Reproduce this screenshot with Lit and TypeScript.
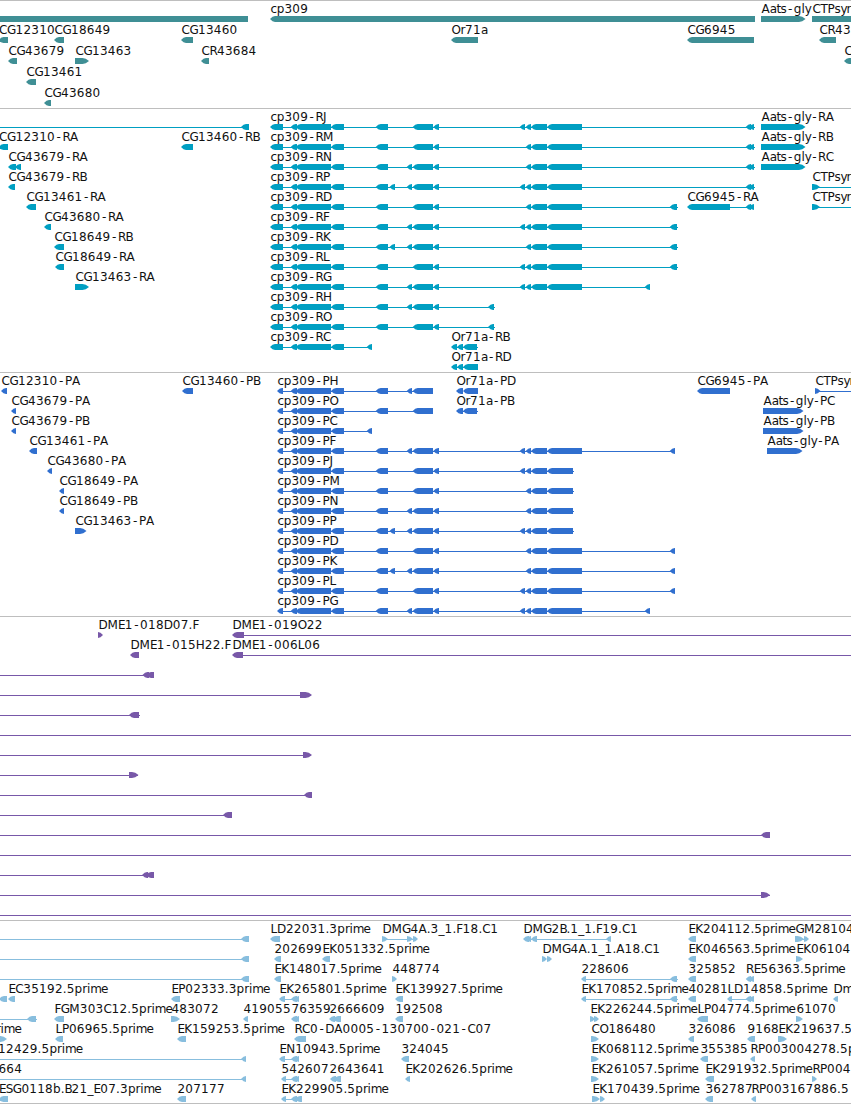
import { LitElement, html, svg, css } from "lit";
import { customElement, property } from "lit/decorators.js";

type Exon = [number, number];
interface Feature {
  row: number;
  label?: string;
  labelX?: number;
  exons: Exon[];
  dir?: "L" | "R" | "N";
  line?: Exon;
}
interface Track {
  kind: string;
  height: number;
  top: number;
  pitch: number;
  features: Feature[];
}

const VIEW = 851;
const f = (row: number, label: string, exons: Exon[], dir: Feature["dir"] = "L", line?: Exon, labelX?: number): Feature =>
  ({ row, label, exons, dir, line, labelX });

/* Advance of each glyph in a label, in pixels. */
const ADVANCE: Record<string, number> = {
  C: 8, G: 8.6, R: 7.6, A: 8.3, B: 7, D: 9, E: 6.9, F: 6.3, H: 9, J: 3.5, K: 7.7, L: 6.5, M: 10.5,
  N: 9, O: 9, P: 7, S: 7, T: 7, a: 6.7, b: 7.7, c: 6.3, e: 7, g: 7.7, i: 3.2, l: 3.2, m: 10.8,
  n: 7.5, p: 7.7, r: 4.7, s: 6, t: 4, y: 6, "-": 7.4, ".": 3.9, _: 6,
};
const glyphX = (text: string, start: number): string => {
  let x = start + 0.4;
  return [...text].map((ch) => {
    const at = ch === "-" ? x + 1.5 : x;
    x += ADVANCE[ch] ?? 7.9;
    return at.toFixed(1);
  }).join(" ");
};

/* cp309 isoforms share one exon chain; flags a, b and d switch the optional exons on. */
const chain = (start: number, flags: string, last: number): Exon[] => {
  const out: Exon[] = [[start, 283], [290.7, 297], [295.7, 331], [331, 344]];
  if (last <= 344) return out;
  out.push([375.7, 388]);
  if (flags.includes("a")) out.push([389.5, 395]);
  if (flags.includes("b")) out.push([406.7, 412]);
  out.push([412.7, 433]);
  if (last <= 433) return out;
  out.push([433.3, 439]);
  if (last <= 439) return out;
  if (flags.includes("d")) out.push([519.7, 525]);
  out.push([525.7, 531], [531, 547], [547, last]);
  return out;
};
const iso = (row: number, name: string, start: number, flags: string, last: number, tail: Exon[] = [], end?: number): Feature => {
  const exons = [...chain(start, flags, last), ...tail];
  return f(row, "cp309-" + name, exons, "L", [start + 1, end ?? exons[exons.length - 1][1]]);
};
const PAIR: Exon[] = [[745.7, 751], [749, 754]];
const END: Exon[] = [[669.7, 677]];
const PEND: Exon[] = [[669.7, 675]];

const genes: Feature[] = [
  f(0, "", [[-9, 248]], "N"), f(0, "cp309", [[270, 755]]), f(0, "Aats-gly", [[761, 805.5]], "R"),
  f(0, "CTPsyn", [[812, 862]], "R"), f(1, "CG12310", [[-1.5, 8]]), f(1, "CG18649", [[54, 64]]),
  f(1, "CG13460", [[181, 193]]), f(1, "Or71a", [[451, 478]]), f(1, "CG6945", [[687, 754]]),
  f(1, "CR43", [[819, 836]]), f(2, "CG43679", [[8, 17]]), f(2, "CG13463", [[75, 89]], "R"),
  f(2, "CR43684", [[201, 209]]), f(2, "C", [[844, 862]]), f(3, "CG13461", [[26, 36]]), f(4, "CG43680", [[44, 51]]),
];

const transcripts: Feature[] = [
  f(0, "", [[241, 249]], "L", [0, 248]),
  f(1, "CG12310-RA", [[-1.5, 8]]), f(1, "CG13460-RB", [[181, 193]]),
  f(2, "CG43679-RA", [[8, 16], [15, 21]]), f(3, "CG43679-RB", [[8, 15]]),
  f(4, "CG13461-RA", [[26, 36]]), f(5, "CG43680-RA", [[44, 51]]),
  f(6, "CG18649-RB", [[54, 64]]), f(7, "CG18649-RA", [[55, 64]]), f(8, "CG13463-RA", [[75, 89]], "R"),
  iso(0, "RJ", 270, "d", 582, PAIR, 755), iso(1, "RM", 270, "", 582, PAIR, 755),
  iso(2, "RN", 270, "b", 582, PAIR, 755), iso(3, "RP", 270, "abd", 582, PAIR, 755),
  iso(4, "RD", 270, "", 582, END, 678), iso(5, "RF", 270, "bd", 582, END, 678),
  iso(6, "RK", 270, "ab", 582, END, 678), iso(7, "RL", 270, "d", 582, END, 678),
  iso(8, "RG", 270, "bd", 582, [[644.7, 650]]), iso(9, "RH", 270, "b", 439, [[488, 494]], 495),
  iso(10, "RO", 270, "", 439, [[488, 494]], 495), iso(11, "RC", 270, "", 344, [[366.7, 372]]),
  f(11, "Or71a-RB", [[451, 457], [457, 463], [463, 477]], "L", [452, 478]),
  f(12, "Or71a-RD", [[451, 457], [457, 463], [463, 478]], "L", [452, 478]),
  f(4, "CG6945-RA", [[687, 730], ...PAIR], "L", [690, 754]),
  f(0, "Aats-gly-RA", [[761, 805.5]], "R"), f(1, "Aats-gly-RB", [[761, 805.5]], "R"), f(2, "Aats-gly-RC", [[761, 805.5]], "R"),
  f(3, "CTPsyn", [[812, 820]], "R", [813, VIEW]), f(4, "CTPsyn", [[812, 820]], "R", [813, VIEW]),
];

const proteins: Feature[] = [
  f(0, "CG12310-PA", [[1, 7]]), f(0, "CG13460-PB", [[182, 193]]), f(1, "CG43679-PA", [[11, 16]]),
  f(2, "CG43679-PB", [[11, 16]]), f(3, "CG13461-PA", [[29, 37]]), f(4, "CG43680-PA", [[47, 52]]),
  f(5, "CG18649-PA", [[59, 64]]), f(6, "CG18649-PB", [[59, 64]]), f(7, "CG13463-PA", [[75, 86.5]], "R"),
  iso(0, "PH", 277, "b", 433), iso(1, "PO", 277, "", 433), iso(2, "PC", 277, "", 344, [[366.7, 372]]),
  iso(3, "PF", 277, "bd", 582, PEND), iso(4, "PJ", 277, "d", 573, [], 574), iso(5, "PM", 277, "", 573, [], 574),
  iso(6, "PN", 277, "b", 573, [], 574), iso(7, "PP", 277, "abd", 573, [], 574), iso(8, "PD", 277, "", 582, PEND),
  iso(9, "PK", 277, "ab", 582, PEND), iso(10, "PL", 277, "d", 582, PEND), iso(11, "PG", 277, "bd", 582, [[644.7, 650]]),
  f(0, "Or71a-PD", [[456, 463], [463, 478]]), f(1, "Or71a-PB", [[456, 463], [463, 477]], "L", [457, 478]),
  f(0, "CG6945-PA", [[697, 730]]), f(1, "Aats-gly-PC", [[763, 803.5]], "R"), f(2, "Aats-gly-PB", [[763, 803.5]], "R"),
  f(3, "Aats-gly-PA", [[767, 802.5]], "R"), f(0, "CTPsyn", [[815, 820.5]], "R", [816, VIEW]),
];

const clones: Feature[] = [
  f(0, "DME1-018D07.F", [[98, 103]], "R"), f(0, "DME1-019O22", [[232, 244]], "L", [233, VIEW]),
  f(1, "DME1-015H22.F", [[130, 139]]), f(1, "DME1-006L06", [[232, 243]], "L", [233, VIEW]),
  f(2, "", [[142.5, 149], [146, 154]], "L", [0, 153]), f(3, "", [[300, 312]], "R", [0, 311]),
  f(4, "", [[129, 139]], "L", [0, 140]), f(5, "", [], "N", [0, VIEW]),
  f(6, "", [[303, 312]], "R", [0, 311]), f(7, "", [[129, 138.5]], "R", [0, 138]),
  f(8, "", [[304, 312]], "L", [0, 311]), f(9, "", [[223, 232]], "L", [0, 231]),
  f(10, "", [[761, 770]], "L", [0, 770]), f(11, "", [], "N", [0, VIEW]),
  f(12, "", [[142, 148], [146, 154]], "L", [0, 153]), f(13, "", [[761, 770]], "R", [0, 770]),
  f(14, "", [], "N", [0, VIEW]),
];

const TAIL: Exon[] = [[291, 297], [294.5, 299]];
const ests: Feature[] = [
  f(0, "", [[241, 249]], "L", [0, 248]), f(0, "LD22031.3prime", [[270, 280]]),
  f(0, "DMG4A.3_1.F18.C1", [[382, 388], [407, 413], [413, 418]], "R", [383, 417]),
  f(0, "DMG2B.1_1.F19.C1", [[523, 529], [526, 531], [531, 537], [606, 611]], "L", [524, 611]),
  f(0, "EK204112.5prime", [[688, 696]]), f(0, "GM28104", [[795, 804], [804, 809]], "R", [796, 808]),
  f(1, "", [[241, 249]], "L", [0, 248]), f(1, "202699", [[274, 281]]), f(1, "EK051332.5prime", [[322, 330]]),
  f(1, "DMG4A.1_1.A18.C1", [[542, 547], [547, 552]], "R"), f(1, "EK046563.5prime", [[688, 696]]),
  f(1, "EK06104", [[796, 803]], "R"),
  f(2, "", [[241, 249]], "L", [0, 248]), f(2, "EK148017.5prime", [[274, 281]]), f(2, "448774", [[392, 397]], "R"),
  f(2, "228606", [[581, 586], [670, 677]], "L", [582, 678]), f(2, "325852", [[688, 696]]),
  f(2, "RE56363.5prime", PAIR),
  f(3, "", [[-1, 7]]), f(3, "EC35192.5prime", [[8, 15]]), f(3, "EP02333.3prime", [[171, 180]]),
  f(3, "EK265801.5prime", [[279, 285], ...TAIL], "L", [280, 299]), f(3, "EK139927.5prime", [[395, 403]]),
  f(3, "EK170852.5prime", [[581, 586], [670, 677]], "L", [582, 678]), f(3, "40281", [[688, 696]]),
  f(3, "LD14858.5prime", [[727, 732], ...PAIR], "L", [728, 754]), f(3, "Dm", [[833, 838]]),
  f(4, "", [[27, 36]], "L", [0, 37]), f(4, "FGM303C12.5prime", [[54, 64]]), f(4, "483072", [[171, 180]], "R"),
  f(4, "419055", [[243, 248]]), f(4, "76359", TAIL), f(4, "2666609", [[329, 335], [333, 341]]),
  f(4, "192508", [[395, 403]]), f(4, "EK226244.5prime", [[590, 595], [594, 599]], "R"),
  f(4, "LP04774.5prime", [[697, 708]]), f(4, "61070", [[796, 803]], "R"),
  f(5, "prime", [[-1, 7]], "R", undefined, -12.2), f(5, "LP06965.5prime", [[55, 63]]),
  f(5, "EK159253.5prime", [[177, 186]]), f(5, "RC0-DA0005-130700-021-C07", [[294, 306]]),
  f(5, "CO186480", [[591, 599]], "R"), f(5, "326086", [[688, 694]]), f(5, "9168", [[747, 755]]),
  f(5, "EK219637.5prime", [[778, 787]], "R"),
  f(6, "12429.5prime", [[241, 246]], "L", [0, 246], -2.3), f(6, "EN10943.5prime", [[279, 285], ...TAIL], "L", [280, 299]),
  f(6, "324045", [[401, 409]]), f(6, "EK068112.5prime", [[591, 599]], "R"), f(6, "355385", [[700, 708]]),
  f(6, "RP003004278.5prime", [[750, 755]]),
  f(7, "664", [[241, 246]], "L", [0, 246], -2), f(7, "542607", [[281, 286], ...TAIL], "L", [282, 299]),
  f(7, "2643641", [[330, 336], [334, 341]], "L", undefined, 329), f(7, "EK202626.5prime", [[405, 410]]),
  f(7, "EK261057.5prime", [[591, 599]], "R"), f(7, "EK291932.5prime", [[705, 714]]), f(7, "RP004", [[812, 817]], "R"),
  f(8, "ESG0118b.B21_E07.3prime", [[-1.5, 8]]), f(8, "207177", [[177, 186]]),
  f(8, "EK229905.5prime", [[281, 286], [291, 297], [295, 302]], "L", [282, 302]),
  f(8, "EK170439.5prime", [[592, 600], [600, 605]], "R"), f(8, "362787", [[705, 713]]),
  f(8, "RP003167886.5", [[751, 756]]),
];

const TRACKS: Track[] = [
  { kind: "gene", height: 108, top: 16, pitch: 21, features: genes },
  { kind: "transcript", height: 264, top: 16, pitch: 20, features: transcripts },
  { kind: "protein", height: 244, top: 16, pitch: 20, features: proteins },
  { kind: "clone", height: 304, top: 16, pitch: 20, features: clones },
  { kind: "est", height: 183, top: 16, pitch: 20, features: ests },
];

@customElement("feature-track")
class FeatureTrack extends LitElement {
  @property({ attribute: false }) track!: Track;

  static styles = css`
    :host { display: block; border-top: 1px solid #bebebe; box-sizing: border-box; overflow: hidden; }
    svg { display: block; width: 100%; }
    .line { shape-rendering: crispEdges; }
    .gene { fill: #3f8f95; }
    .transcript { fill: #009fc2; }
    .protein { fill: #306fcf; }
    .clone { fill: #7858a8; }
    .est { fill: #88bede; }
    .label { fill: #111; font: 12px "DejaVu Sans", sans-serif; }
  `;

  private exon([a, b]: Exon, dir: string, y: number) {
    const w = b - a;
    if (dir === "N") return svg`<rect x=${a} y=${y} width=${w} height="6"></rect>`;
    const t = Math.min(dir === "L" ? 5 : 6.5, w);
    const points = dir === "L"
      ? `${a},${y + 3} ${a + t * 0.5},${y + 0.8} ${a + t},${y} ${b},${y} ${b},${y + 6} ${a + t},${y + 6} ${a + t * 0.5},${y + 5.2}`
      : `${b},${y + 3} ${b - t * 0.5},${y + 0.8} ${b - t},${y} ${a},${y} ${a},${y + 6} ${b - t},${y + 6} ${b - t * 0.5},${y + 5.2}`;
    return svg`<polygon points=${points}></polygon>`;
  }

  render() {
    const { kind, height, top, pitch, features } = this.track;
    const inner = height - 1;
    return html`<svg viewBox="0 0 ${VIEW} ${inner}" height=${inner}>
      <g class=${kind}>
        ${features.map((ft) => {
          const y = top - 1 + ft.row * pitch;
          return svg`${ft.line ? svg`<rect class="line" x=${ft.line[0]} y=${y + 3} width=${ft.line[1] - ft.line[0]} height="1"></rect>` : ""}
            ${ft.exons.map((e) => this.exon(e, ft.dir ?? "L", y))}`;
        })}
      </g>
      ${features.filter((ft) => ft.label).map((ft) =>
        svg`<text class="label" x=${glyphX(ft.label!, ft.labelX ?? ft.exons[0][0])} y=${top - 4 + ft.row * pitch}>${ft.label}</text>`)}
    </svg>`;
  }
}

@customElement("app-root")
class AppRoot extends LitElement {
  static styles = css`
    :host { display: block; width: 851px; height: 1104px; overflow: hidden; background: #fff; }
    .tracks { display: flex; flex-direction: column; border-bottom: 1px solid #bebebe; }
  `;
  render() {
    return html`<div class="tracks">${TRACKS.map((t) => html`<feature-track .track=${t}></feature-track>`)}</div>`;
  }
}
